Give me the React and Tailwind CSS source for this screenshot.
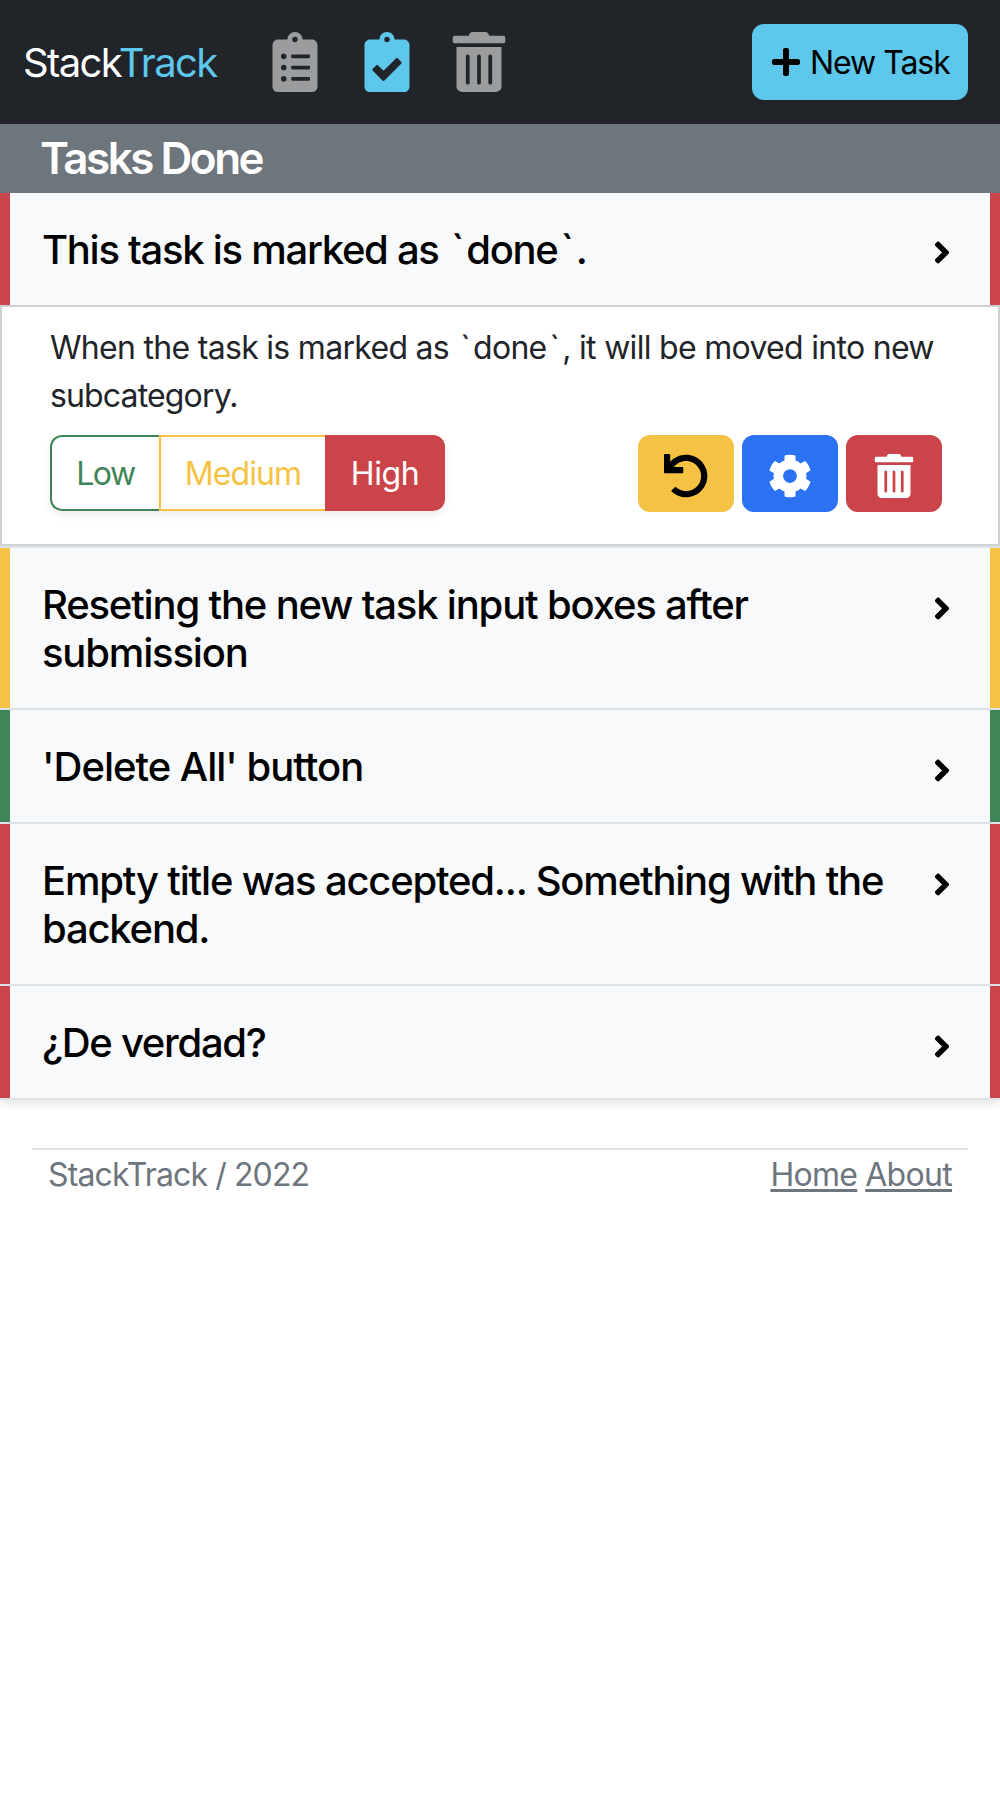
import { FaClipboardList, FaClipboardCheck, FaTrashAlt, FaPlus, FaUndo, FaCog, FaAngleRight } from "react-icons/fa";

const Tick = () => <span className="mx-[3px]">`</span>;

const tasks = [
  {
    id: 1,
    title: <>This task is marked as <Tick />done<Tick />.</>,
    border: "border-[#cb444a]",
    tracking: "tracking-[-1.28px]",
    open: true,
  },
  { id: 2, title: "Reseting the new task input boxes after submission", border: "border-[#f6c244]", tracking: "tracking-[-1.18px]" },
  { id: 3, title: "'Delete All' button", border: "border-[#408558]", tracking: "tracking-[-1px]" },
  { id: 4, title: "Empty title was accepted... Something with the backend.", border: "border-[#cb444a]", tracking: "tracking-[-1.2px]" },
  { id: 5, title: "¿De verdad?", border: "border-[#cb444a]", tracking: "tracking-[-1.3px]" },
];

function TaskDetails() {
  return (
    <div className="h-[241px] border-2 border-[#cfd0d1] bg-white pl-12 pr-[56px] pt-[17px]">
      <p className="text-[32px] leading-[48px] tracking-[-0.7px] text-[#212529]">
        <span className="block whitespace-nowrap">
          When the task is marked as <Tick />done<Tick />, it will be moved into new
        </span>
        <span className="block tracking-[-0.85px]">subcategory.</span>
      </p>
      <div className="mt-[15px] flex items-start justify-between">
        <div className="flex h-19 rounded-xl text-[32px] shadow-[0_4px_8px_rgba(0,0,0,0.075)]">
          <button className="w-[109px] rounded-l-xl border-2 border-r-0 border-[#408558] pt-[2px] tracking-[-1.4px] text-[#408558]">Low</button>
          <button className="w-[166px] border-2 border-r-0 border-[#f6c244] pt-[2px] tracking-[-0.9px] text-[#f6c244]">Medium</button>
          <button className="w-[120px] rounded-r-xl bg-[#cb444a] pt-[2px] tracking-[-0.4px] text-white">High</button>
        </div>
        <div className="flex gap-2">
          <button className="flex h-[77px] w-24 items-center justify-center rounded-xl bg-[#f6c244] pt-1 text-black">
            <FaUndo size={44} />
          </button>
          <button className="flex h-[77px] w-24 items-center justify-center rounded-xl bg-[#2c72f5] pt-1 text-white">
            <FaCog size={44} />
          </button>
          <button className="flex h-[77px] w-24 items-center justify-center rounded-xl bg-[#cb444a] pt-1 text-white">
            <FaTrashAlt size={44} />
          </button>
        </div>
      </div>
    </div>
  );
}

export default function App() {
  return (
    <div className="min-h-[1800px] w-[1000px] bg-white font-['Inter',sans-serif]">
      <nav className="flex h-31 items-center bg-[#212529] pl-[23px] pr-8">
        <div className="w-[237px] whitespace-nowrap pt-[2px] text-[40px] leading-[60px] tracking-[-1.62px] text-white">
          Stack<span className="text-[#5dc8ec]">Track</span>
        </div>
        <div className="flex grow items-center">
          <FaClipboardList size={60} className="w-[70px] text-[#9b9c9e]" />
          <FaClipboardCheck size={60} className="ml-[22px] w-[70px] text-[#5dc8ec]" />
          <FaTrashAlt size={60} className="ml-[22px] w-[70px] text-[#9b9c9e]" />
        </div>
        <button className="flex h-19 w-54 items-center rounded-xl bg-[#5dc8ec] pl-5 text-[32px] tracking-[-1.05px] whitespace-nowrap text-black">
          <FaPlus size={32} className="mr-[10px] w-7" />
          <span className="pt-[2px]">New Task</span>
        </button>
      </nav>
      <h1 className="h-[69px] bg-[#6d757d] pl-10 text-[44px] font-[580] leading-[69px] tracking-[-2.5px] text-white">
        Tasks Done
      </h1>
      <main className="shadow-[0_4px_8px_rgba(0,0,0,0.1)]">
        {tasks.map((task) => (
          <section key={task.id} className="border-b-2 border-[#dee2e6]">
            <div className={`flex items-start justify-between border-x-10 bg-[#f8f9fb] pt-[33px] pb-[31px] pl-8 pr-9 ${task.border}`}>
              <h2 className={`w-[860px] text-[40px] font-[530] leading-[48px] text-black ${task.tracking}`}>{task.title}</h2>
              <FaAngleRight size={35} className={`w-[24px] shrink-0 text-black ${task.open ? "mt-[9px]" : "mt-[10px]"}`} />
            </div>
            {task.open && <TaskDetails />}
          </section>
        ))}
      </main>
      <footer className="mx-8 mt-12 flex justify-between border-t-2 border-[#dee2e6] px-4 pt-px text-[32px] leading-[48px] tracking-[-0.88px] text-[#6d757d]">
        <span>StackTrack / 2022</span>
        <span className="flex gap-2 tracking-[-0.7px]">
          <a href="#" className="underline decoration-3 underline-offset-3">Home</a>
          <a href="#" className="underline decoration-3 underline-offset-3">About</a>
        </span>
      </footer>
    </div>
  );
}
